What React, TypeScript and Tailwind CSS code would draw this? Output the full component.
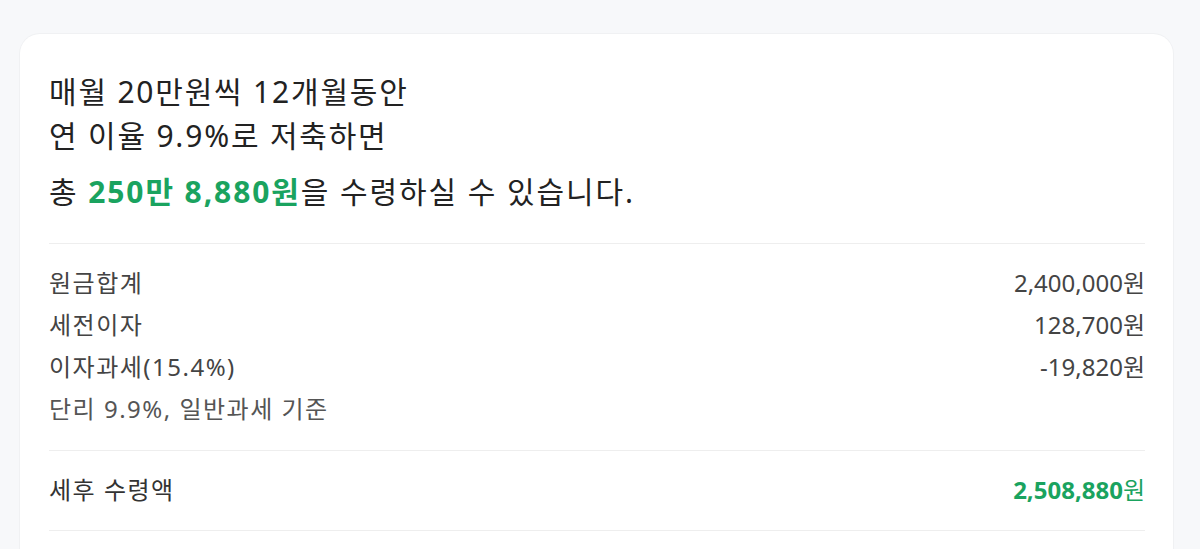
const rows = [
  { label: "원금합계", value: "2,400,000원" },
  { label: "세전이자", value: "128,700원" },
  { label: "이자과세(15.4%)", value: "-19,820원" },
];

export default function App() {
  return (
    <div
      className="min-h-[549px] w-full bg-[#f7f8fa] pl-5 pr-[27px] pt-[34px]"
      style={{ fontFamily: '"Noto Sans", "Noto Sans CJK KR", sans-serif' }}
    >
      <div className="rounded-[20px] bg-white pl-[29px] pr-[28px] pt-[36px] pb-10 shadow-[0_0_0_1px_#f0f1f3]">
        <div className="text-[30px] leading-[44px] tracking-[1.8px] text-[#222]">
          <p>매월 20만원씩 12개월동안</p>
          <p>연 이율 9.9%로 저축하면</p>
        </div>
        <p className="mt-[12px] text-[30px] leading-[44px] tracking-[1.9px] text-[#222]">
          총 <span className="font-bold text-[#1aa35f]">250만 8,880원</span>을 수령하실 수 있습니다.
        </p>

        <div className="mt-[29px] border-t border-[#eeeeee] pt-[18px] pb-[20px]">
          {rows.map((r) => (
            <div key={r.label} className="flex items-center justify-between text-[24px] leading-[42px] text-[#444]">
              <span className="tracking-[1.5px]">{r.label}</span>
              <span>{r.value}</span>
            </div>
          ))}
          <p className="text-[24px] leading-[42px] tracking-[1.5px] text-[#555]">단리 9.9%, 일반과세 기준</p>
        </div>

        <div className="flex items-center justify-between border-y border-[#eeeeee] pt-[18px] pb-[19px] text-[24px] leading-[42px] text-[#333]">
          <span className="tracking-[1.5px]">세후 수령액</span>
          <span className="text-[#1aa35f]">
            <span className="font-bold">2,508,880</span>원
          </span>
        </div>
      </div>
    </div>
  );
}
